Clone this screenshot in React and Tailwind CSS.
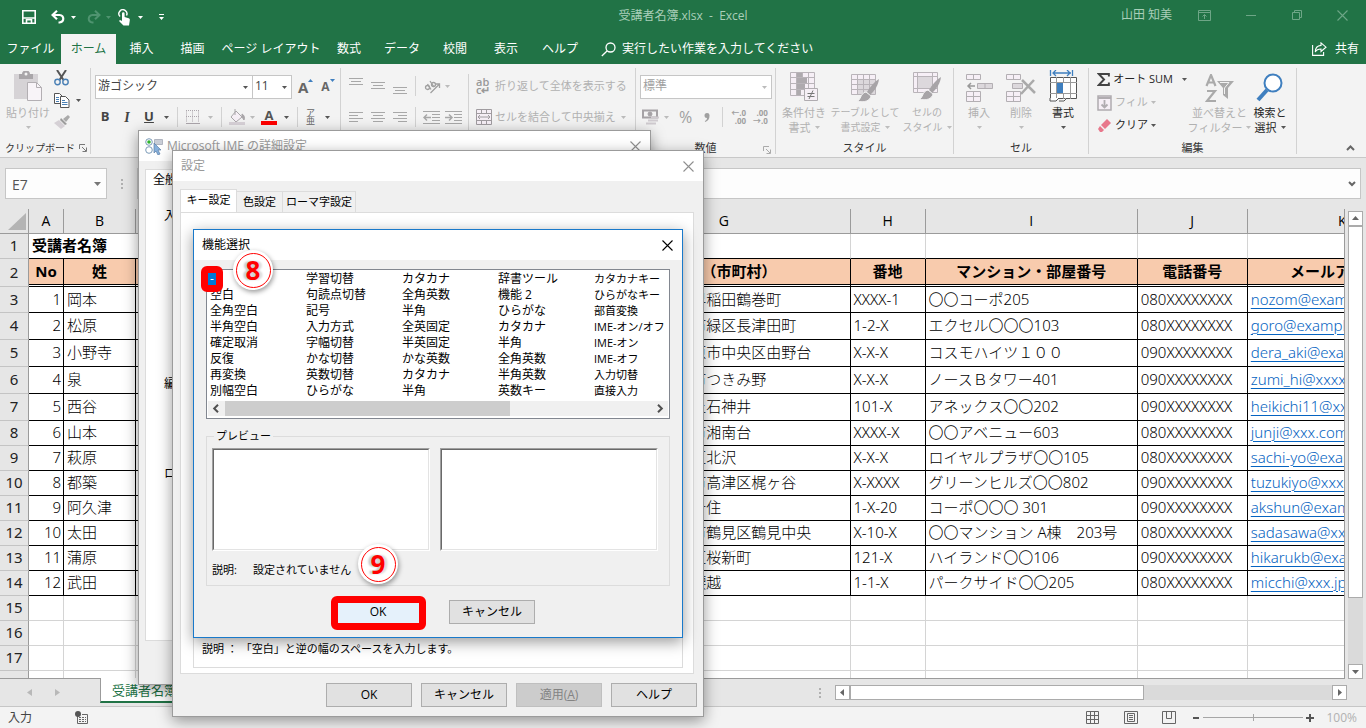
import React from 'react';

const TABS = [
  { label: 'ファイル', width: 'w-[61px]' },
  { label: 'ホーム', width: 'w-[55px]', active: true },
  { label: '挿入', width: 'w-[51px]' },
  { label: '描画', width: 'w-[51px]' },
  { label: 'ページ レイアウト', width: 'w-[106px]' },
  { label: '数式', width: 'w-[50px]' },
  { label: 'データ', width: 'w-[56px]' },
  { label: '校閲', width: 'w-[50px]' },
  { label: '表示', width: 'w-[52px]' },
  { label: 'ヘルプ', width: 'w-[56px]' },
];

const COLUMNS = [
  { id: 'A', width: 'w-[35px]' },
  { id: 'B', width: 'w-[72px]' },
  { id: 'C', width: 'w-[72px]' },
  { id: 'D', width: 'w-[130px]' },
  { id: 'E', width: 'w-[130px]' },
  { id: 'F', width: 'w-[130px]' },
  { id: 'G', width: 'w-[252px]' },
  { id: 'H', width: 'w-[75px]' },
  { id: 'I', width: 'w-[212px]' },
  { id: 'J', width: 'w-[110px]' },
  { id: 'K', width: 'w-[190px]' },
];

const HEADINGS = ['No', '姓', '', '', '', '', '住所（市町村）', '番地', 'マンション・部屋番号', '電話番号', 'メールアドレス'];

const MEMBERS = [
  ['岡本', '東京都新宿区早稲田鶴巻町', 'XXXX-1', '〇〇コーポ205', '080XXXXXXXX', 'nozom@example.com'],
  ['松原', '神奈川県横浜市緑区長津田町', '1-2-X', 'エクセル〇〇〇103', '080XXXXXXXX', 'goro@example.com'],
  ['小野寺', '神奈川県相模原市中央区由野台', 'X-X-X', 'コスモハイツ１００', '090XXXXXXXX', 'dera_aki@example.com'],
  ['泉', '神奈川県大和市つきみ野', 'X-X-X', 'ノースＢタワー401', '090XXXXXXXX', 'zumi_hi@xxxx.com'],
  ['西谷', '東京都練馬区上石神井', '101-X', 'アネックス〇〇202', '090XXXXXXXX', 'heikichi11@xxx.com'],
  ['山本', '神奈川県藤沢市湘南台', 'XXXX-X', '〇〇アベニュー603', '080XXXXXXXX', 'junji@xxx.com'],
  ['萩原', '東京都世田谷区北沢', 'X-X-X', 'ロイヤルプラザ〇〇105', '080XXXXXXXX', 'sachi-yo@example.com'],
  ['都築', '神奈川県川崎市高津区梶ヶ谷', 'X-XXXX', 'グリーンヒルズ〇〇802', '090XXXXXXXX', 'tuzukiyo@xxx.jp'],
  ['阿久津', '東京都足立区千住', '1-X-20', 'コーポ〇〇〇 301', '090XXXXXXXX', 'akshun@example.com'],
  ['太田', '神奈川県横浜市鶴見区鶴見中央', 'X-10-X', '〇〇マンション A棟　203号', '080XXXXXXXX', 'sadasawa@xxx.com'],
  ['蒲原', '東京都世田谷区桜新町', '121-X', 'ハイランド〇〇106', '090XXXXXXXX', 'hikarukb@example.com'],
  ['武田', '神奈川県鎌倉腰越', '1-1-X', 'パークサイド〇〇205', '080XXXXXXXX', 'micchi@xxx.jp'],
];

const FUNCTIONS = [
  ['-', '空白', '全角空白', '半角空白', '確定取消', '反復', '再変換', '別幅空白'],
  ['学習切替', '句読点切替', '記号', '入力方式', '字幅切替', 'かな切替', '英数切替', 'ひらがな'],
  ['カタカナ', '全角英数', '半角', '全英固定', '半英固定', 'かな英数', 'カタカナ', '半角'],
  ['辞書ツール', '機能 2', 'ひらがな', 'カタカナ', '半角', '全角英数', '半角英数', '英数キー'],
  ['カタカナキー', 'ひらがなキー', '部首変換', 'IME-オン/オフ', 'IME-オン', 'IME-オフ', '入力切替', '直接入力'],
];

/* ---------- small drawings ---------- */

function Caret({ className = 'text-[#555]' }) {
  return (
    <svg width="5" height="3" viewBox="0 0 5 3" className={`shrink-0 ${className}`} fill="currentColor">
      <path d="M0 0h5L2.5 3z" />
    </svg>
  );
}

function Cross({ className = 'text-[#8f8f8f]' }) {
  return (
    <svg width="11" height="11" viewBox="0 0 11 11" className={className} stroke="currentColor" strokeWidth="1.1">
      <path d="M.5.5l10 10M10.5.5l-10 10" />
    </svg>
  );
}

function Lines({ rows, className = 'text-[#a8a8a8]' }) {
  return (
    <svg width="14" height="17" viewBox="0 0 14 17" className={className} fill="currentColor">
      {rows.map(([x, y, w]) => (
        <rect key={y} x={x} y={y} width={w} height="1" />
      ))}
    </svg>
  );
}

function Launcher({ className = 'text-[#777]' }) {
  return (
    <svg width="8" height="8" viewBox="0 0 8 8" className={className} fill="none" stroke="currentColor">
      <path d="M.5 5V.5H6M3 3l4 4M7.500 3.500v4h-4" />
    </svg>
  );
}

function PasteIcon() {
  return (
    <svg width="30" height="31" viewBox="0 0 30 31">
      <path d="M1 3h24v25H1z" fill="#d6d3d6" />
      <path d="M6 3h3a4 3.500 0 0 1 8 0h3v5H6z" fill="#a9a6a9" />
      <circle cx="13" cy="3" r="1.500" fill="#f3f3f3" />
      <path d="M14.500 11.500h9l5 5v13h-14z" fill="#f8f4f8" stroke="#b3afb3" />
      <path d="M23.500 11.500v5h5" fill="none" stroke="#b3afb3" />
    </svg>
  );
}

function ScissorsIcon() {
  return (
    <svg width="15" height="16" viewBox="0 0 15 16" fill="none">
      <path d="M3 0l6.500 10M12 0L5.500 10" stroke="#555" strokeWidth="2" />
      <circle cx="3.500" cy="12" r="2.700" stroke="#4a80b5" strokeWidth="1.400" />
      <circle cx="11.500" cy="12" r="2.700" stroke="#4a80b5" strokeWidth="1.400" />
    </svg>
  );
}

function CopyIcon() {
  return (
    <svg width="16" height="15" viewBox="0 0 16 15" fill="#fff" stroke="#555">
      <path d="M.5.5h5l3 3v7h-8z" />
      <path d="M2 4.500h3M2 6.500h3M2 8.500h3" stroke="#4a80b5" />
      <path d="M6.500 3.500h5l3.500 3.500v7.500H6.500z" />
      <path d="M8 7.500h3M8 9.500h5.500M8 11.500h5.500" stroke="#4a80b5" />
    </svg>
  );
}

function BrushIcon() {
  return (
    <svg width="16" height="14" viewBox="0 0 16 14">
      <path d="M9 4l5-4 2 2-4 5z" fill="#aaa" />
      <path d="M7 3l6 6-2 1-5-5z" fill="#9c9c9c" />
      <path d="M5 5l6 6-4 3-7-6z" fill="#d5d0d5" />
    </svg>
  );
}

function ConditionalIcon() {
  return (
    <svg width="30" height="31" viewBox="0 0 30 31" fill="none">
      <path d="M1 1h25v25H1z" fill="#f6eff6" />
      <path d="M8 1h5v5H8zM8 7h10v5H8zM8 13h8v5H8zM8 19h4v6H8z" fill="#aeaaae" />
      <path d="M1.500 1.500h24v23h-24zM1 6.500h25M1 12.500h25M1 18.500h25M7.500 1v24M13.500 1v6M19.500 1v24" stroke="#b9b4b9" />
      <path d="M15.500 17.500h13v12h-13z" fill="#f6eff6" stroke="#b0acb0" />
      <path d="M18.500 22.500h7M18.500 25.500h7M24 19.500l-4 8.500" stroke="#777" />
    </svg>
  );
}

function BrushOver() {
  return (
    <>
      <path d="M29 6c-5 3-9 8-12 13l3 3c5-5 8-9 9-16z" fill="#a7a4a7" />
      <path d="M16 19l5 4c-1 5-7 7-14 5 4 0 3-8 9-9z" fill="#a7a4a7" stroke="#f3f3f3" />
    </>
  );
}

function TableStyleIcon() {
  return (
    <svg width="30" height="29" viewBox="0 0 30 29" fill="none">
      <path d="M1.500 1.500h24v20h-24z" fill="#f6eff6" />
      <path d="M7 6h18v15H7z" fill="#dcd8dc" />
      <path d="M1.500 1.500h24v20h-24zM1 6.500h25M1 11.500h25M1 16.500h25M7.500 1v21M13.500 1v21M19.500 1v21" stroke="#b9b4b9" />
      <BrushOver />
    </svg>
  );
}

function CellStyleIcon() {
  return (
    <svg width="30" height="31" viewBox="0 0 30 31" fill="none">
      <path d="M1.500 1.500h24v20h-24z" fill="#f6eff6" />
      <path d="M6 6h15v11H6z" fill="#dcd8dc" />
      <path d="M1.500 1.500h24v20h-24zM1 5.500h25M1 17.500h25M5.500 1v21M20.500 1v21" stroke="#b9b4b9" />
      <BrushOver />
    </svg>
  );
}

function InsertCellsIcon() {
  return (
    <svg width="27" height="28" viewBox="0 0 27 28" fill="#f6eff6" stroke="#b3afb3">
      <path d="M.5.5h14v5H.5zM7.500.5v5" />
      <path d="M11.500 9.500h15v5h-15zM19 9.500v5" fill="#dcd8dc" />
      <path d="M.5 17.500h14v10H.5zM7.500 17.500v10M.5 22.500h14" />
      <path d="M2 12h7M5 9l-3 3 3 3" fill="none" stroke="#999" strokeWidth="1.500" />
    </svg>
  );
}

function DeleteCellsIcon() {
  return (
    <svg width="30" height="28" viewBox="0 0 30 28" fill="#f6eff6" stroke="#b3afb3">
      <path d="M.5.5h14v5H.5zM7.500.5v5" />
      <path d="M6.500 9.500h10v5h-10z" fill="#dcd8dc" />
      <path d="M.5 17.500h14v10H.5zM7.500 17.500v10M.5 22.500h14" />
      <path d="M16 6l13 13M28 6L15 20" fill="none" stroke="#aaa" strokeWidth="2.500" />
    </svg>
  );
}

function FormatCellsIcon() {
  return (
    <svg width="29" height="32" viewBox="0 0 29 32" fill="none">
      <path d="M1.500 0v6M23.500 0v6M4 3h18M7 0L4 3l3 3M18 0l3 3-3 3" stroke="#3f7fbf" strokeWidth="1.300" />
      <path d="M1.500 7.500h26v21h-26z" fill="#fff" stroke="#555" />
      <path d="M1 12.500h27M1 23.500h27M7.500 7v22M14.500 7v6M14.500 23v6M21.500 7v22" stroke="#999" />
      <path d="M8 13h6v10H8z" fill="#3f7fbf" />
      <path d="M1 28v3h6l3-3M10 31h5l3-3" fill="#fff" stroke="#555" />
    </svg>
  );
}

function SortIcon() {
  return (
    <svg width="30" height="28" viewBox="0 0 30 28" fill="none" stroke="#aaa" strokeWidth="2.200">
      <path d="M1.500 12L6 1l4.500 11M3 8.500h6" />
      <path d="M2 17h8L2 27h9" />
      <path d="M12 7h17l-6 7v11l-5-4v-7z" fill="#aaa" stroke="none" />
      <path d="M15 8.500h9l-4.500 5.500v6" stroke="#f3f3f3" strokeWidth="1" />
    </svg>
  );
}

function FindIcon() {
  return (
    <svg width="30" height="29" viewBox="0 0 30 29" fill="none" stroke="#3f7fbf">
      <circle cx="18" cy="10" r="8.500" fill="#fff" strokeWidth="2" />
      <path d="M12 17L3 27" strokeWidth="4" />
    </svg>
  );
}

/* ---------- title bar and tabs ---------- */

function TitleBar() {
  return (
    <header className="flex h-[34px] items-center bg-[#217346] pr-[18px] text-[12px] text-[#a9cfb9]">
      <div className="flex flex-1 items-center pl-[22px] text-white">
        <button type="button" aria-label="上書き保存">
          <svg width="14" height="14" viewBox="0 0 14 14" fill="none" stroke="currentColor" strokeWidth="1.600">
            <path d="M.8.8h12.400v12.400H.8zM.8 8h12.400M4.500 13V9.800h5V13" />
          </svg>
        </button>
        <button type="button" aria-label="元に戻す" className="ml-[15px] flex items-center gap-[5px]">
          <svg width="15" height="14" viewBox="0 0 15 14" fill="none" stroke="currentColor" strokeWidth="2.200">
            <path d="M6 .8L1.500 5 6 9.200M2 5h6.500a4.500 3.800 0 0 1 0 7.500H7.500" />
          </svg>
          <Caret className="text-white" />
        </button>
        <button type="button" aria-label="やり直し" className="ml-[10px] flex items-center gap-[5px] text-[#4f9470]">
          <svg width="15" height="14" viewBox="0 0 15 14" fill="none" stroke="currentColor" strokeWidth="2">
            <path d="M9 .8L13.500 5 9 9.200M13 5H6.500a4.500 3.800 0 0 0 0 7.500H7.500" />
          </svg>
          <Caret className="text-[#4f9470]" />
        </button>
        <button type="button" aria-label="タッチ モード" className="ml-[7px] flex items-center gap-2">
          <svg width="12" height="17" viewBox="0 0 12 17">
            <path d="M2 7.500a4 4 0 1 1 6.500-1" fill="none" stroke="#fff" strokeWidth="1.400" />
            <path d="M4 4.500a1.300 1.300 0 0 1 2.600 0V8l4 1.200c1 .4 1.400 1 1.200 2L11 16.500H5.500L1 12l1-1 2 1z" fill="#fff" />
          </svg>
          <Caret className="text-white" />
        </button>
        <button type="button" aria-label="クイック アクセス ツール バーのユーザー設定" className="ml-[15px]">
          <svg width="7" height="7" viewBox="0 0 7 7" fill="currentColor">
            <path d="M1 0h5v1H1zM1 3h5L3.500 6z" />
          </svg>
        </button>
      </div>
      <h1 className="mr-1 whitespace-pre pb-[3px]">受講者名簿.xlsx  -  Excel</h1>
      <div className="flex flex-1 items-center justify-end pb-1 text-[#6ea687]">
        <span className="mr-[26px] text-[#a9cfb9]">山田 知美</span>
        <button type="button" aria-label="リボンの表示オプション">
          <svg width="13" height="11" viewBox="0 0 13 11" fill="none" stroke="currentColor">
            <path d="M.5.5h12v10H.5zM.5 2.500h12M6.500 9V4.500M4.500 6.500l2-2 2 2" />
          </svg>
        </button>
        <button type="button" aria-label="最小化" className="ml-[35px] h-px w-2.5 bg-[#6ea687]" />
        <button type="button" aria-label="元のサイズに戻す" className="ml-9">
          <svg width="10" height="10" viewBox="0 0 10 10" fill="none" stroke="currentColor">
            <path d="M.5 2.500h7v7h-7zM2.500 2V.5h7v7H8" />
          </svg>
        </button>
        <button type="button" aria-label="閉じる" className="ml-[35px]">
          <Cross className="text-[#6ea687]" />
        </button>
      </div>
    </header>
  );
}

function TabBar() {
  return (
    <nav className="flex h-[30px] items-stretch bg-[#217346] text-[12px] text-white">
      {TABS.map((tab) => (
        <button
          key={tab.label}
          type="button"
          className={`${tab.width} whitespace-nowrap ${tab.active ? 'bg-[#f3f3f3] text-[#217346]' : ''}`}
        >
          {tab.label}
        </button>
      ))}
      <button type="button" className="flex items-center gap-1.5 whitespace-nowrap pl-[13px]">
        <svg width="15" height="15" viewBox="0 0 15 15" fill="none" stroke="currentColor" strokeWidth="1.300">
          <circle cx="9.500" cy="5.500" r="4.500" />
          <path d="M6.300 8.700L.8 14" />
        </svg>
        実行したい作業を入力してください
      </button>
      <button type="button" className="ml-auto flex items-center gap-2 pr-[7px]">
        <svg width="15" height="14" viewBox="0 0 15 14" fill="none" stroke="currentColor" strokeWidth="1.100">
          <path d="M.6 3v10.400h11V10" />
          <path d="M9 .9l5 4.300-5 4.300V7C6 7 4.300 8 3.300 10c0-4 2-6.300 5.700-6.600z" />
        </svg>
        共有
      </button>
    </nav>
  );
}

/* ---------- ribbon ---------- */

function Group({ label, launcher, className, children }) {
  return (
    <section className={`relative flex shrink-0 flex-col border-r border-[#d2d2d2] ${className}`}>
      <div className="flex h-[74px]">{children}</div>
      {label && <h2 className="text-center text-[11px] leading-3 text-[#333]">{label}</h2>}
      {launcher && (
        <button type="button" aria-label={`${label}の詳細`} className="absolute bottom-0 right-1">
          <Launcher className={launcher} />
        </button>
      )}
    </section>
  );
}

function BigButton({ icon, lines, className, enabled, size = 'text-[11px]' }) {
  const [first, second] = lines;
  return (
    <button
      type="button"
      className={`flex flex-col items-center whitespace-nowrap leading-[15px] ${size} ${className} ${enabled ? 'text-[#262626]' : 'text-[#b1b1b1]'}`}
    >
      <span className="flex h-[34px] items-end justify-center">{icon}</span>
      <span className="mt-[3px]">{first}</span>
      <span className="flex h-[15px] items-center gap-1">
        {second}
        <Caret className={enabled ? 'text-[#555]' : 'text-[#bdbdbd]'} />
      </span>
    </button>
  );
}

function VLine({ className = 'h-5' }) {
  return <span className={`w-px shrink-0 bg-[#d2d2d2] ${className}`} />;
}

function ClipboardGroup() {
  return (
    <Group label="" className="w-[91px]">
      <BigButton icon={<PasteIcon />} lines={['貼り付け', '']} className="ml-[5px] w-[46px]" />
      <div className="flex flex-col gap-[7px] pl-[3px] pt-[2px]">
        <button type="button" aria-label="切り取り"><ScissorsIcon /></button>
        <button type="button" aria-label="コピー" className="flex items-center gap-[6px]">
          <CopyIcon />
          <Caret />
        </button>
        <button type="button" aria-label="書式のコピー"><BrushIcon /></button>
      </div>
      <div className="absolute bottom-0 flex w-full items-center justify-between pl-[5px] pr-[3px]">
        <h2 className="whitespace-nowrap text-[10px] leading-3 text-[#333]">クリップボード</h2>
        <button type="button" aria-label="クリップボードの詳細"><Launcher /></button>
      </div>
    </Group>
  );
}

function Combo({ label, value, className, muted }) {
  return (
    <div className={`relative h-6 border border-[#c6c6c6] bg-white ${className}`}>
      <select
        aria-label={label}
        className={`block h-5 w-full appearance-none bg-transparent pl-0.5 text-[12px] leading-5 outline-none ${muted ? 'text-[#a0a0a0]' : 'text-[#444]'}`}
      >
        <option>{value}</option>
      </select>
      <span className="pointer-events-none absolute inset-y-0 right-1 flex items-center">
        <Caret className={muted ? 'text-[#bbb]' : 'text-[#555]'} />
      </span>
    </div>
  );
}

function FontGroup() {
  return (
    <Group className="w-[250px]">
      <div className="flex flex-col pl-1 pt-[7px]">
        <div className="flex items-center">
          <Combo label="フォント" value="游ゴシック" className="w-[158px]" />
          <Combo label="フォント サイズ" value="11" className="-ml-px w-[40px]" />
          <button type="button" aria-label="フォント サイズの拡大" className="ml-[6px] flex items-start text-[15px] font-bold leading-5 text-[#666]">
            A<svg width="5" height="3" viewBox="0 0 5 3" className="mt-[2px]" fill="#3f7fbf"><path d="M0 3h5L2.500 0z" /></svg>
          </button>
          <button type="button" aria-label="フォント サイズの縮小" className="ml-[8px] flex items-start text-[12px] font-bold leading-5 text-[#666]">
            A<Caret className="mt-[2px] text-[#3f7fbf]" />
          </button>
        </div>
        <div className="mt-2 flex h-5 items-center text-[13px] text-[#444]">
          <button type="button" className="ml-[5px] w-[10px] font-bold">B</button>
          <button type="button" className="ml-[12px] w-[10px] font-['Liberation_Serif',serif] text-[14px] font-bold italic">I</button>
          <button type="button" className="ml-[12px] w-[10px] font-bold underline">U</button>
          <span className="ml-[10px]"><Caret /></span>
          <VLine className="ml-2 h-5" />
          <button type="button" aria-label="罫線" className="ml-2">
            <svg width="14" height="14" viewBox="0 0 14 14" stroke="#aca6ac" fill="none">
              <path d="M.5.500v12M6.500.5v12M12.500.5v12M0 .5h13M0 6.500h13" strokeDasharray="1 1" />
              <path d="M0 13.500h14" />
            </svg>
          </button>
          <span className="ml-2"><Caret className="text-[#bbb]" /></span>
          <VLine className="ml-2 h-5" />
          <button type="button" aria-label="塗りつぶしの色" className="ml-[7px]">
            <svg width="17" height="16" viewBox="0 0 17 16" fill="none" stroke="#a9a6a9">
              <path d="M7 2l6 6-6 5-5-5z" fill="#f6eff6" />
              <path d="M6 6V0M13 5c2 1 3 3 2 6l-2-3z" fill="#a9a6a9" />
              <path d="M0 14.500h16" stroke="#d8d2d8" strokeWidth="3" />
            </svg>
          </button>
          <span className="ml-1"><Caret className="text-[#bbb]" /></span>
          <button type="button" className="ml-[6px] w-4 border-b-4 border-[#f00] text-center font-bold leading-3 text-[#555]">A</button>
          <span className="ml-[7px]"><Caret /></span>
          <VLine className="ml-2 h-5" />
          <button type="button" aria-label="ふりがなの表示/非表示" className="ml-2 text-[9px] leading-2 text-[#666]">
            <span className="block">ア</span>
            <span className="block">亜</span>
          </button>
          <span className="ml-[10px]"><Caret /></span>
        </div>
      </div>
    </Group>
  );
}

function AlignGroup() {
  return (
    <Group className="w-[295px]">
      <div className="flex flex-col gap-[14px] pl-2 pt-[9px]">
        <div className="flex h-[17px] gap-2">
          <Lines rows={[[0, 1, 14], [2, 4, 10], [0, 7, 14]]} />
          <Lines rows={[[0, 5, 14], [2, 8, 10], [0, 11, 14]]} />
          <Lines rows={[[0, 10, 14], [2, 13, 10], [0, 16, 14]]} />
        </div>
        <div className="flex h-[17px] gap-2">
          <Lines rows={[[0, 4, 14], [0, 7, 9], [0, 10, 14], [0, 13, 9]]} />
          <Lines rows={[[0, 4, 14], [2, 7, 10], [0, 10, 14], [2, 13, 10]]} />
          <Lines rows={[[0, 4, 14], [5, 7, 9], [0, 10, 14], [5, 13, 9]]} />
        </div>
      </div>
      <div className="flex flex-col gap-[11px] pl-2 pt-2">
        <div className="flex h-5 items-center">
          <VLine />
          <button type="button" aria-label="方向" className="ml-2 flex items-center gap-1">
            <svg width="17" height="15" viewBox="0 0 17 15" fill="none" stroke="#a0a0a0" strokeWidth="1.300">
              <circle cx="3.500" cy="8.500" r="2" />
              <path d="M3.500 5l3.500 5.500M6 2l4 6" />
              <circle cx="9.500" cy="5.500" r="2" />
              <path d="M6.500 14l8.500-8.500M11.500 5h4v4" />
            </svg>
            <Caret className="text-[#bbb]" />
          </button>
        </div>
        <div className="flex h-5 items-center">
          <VLine />
          <button type="button" aria-label="インデントを減らす" className="ml-[7px]">
            <svg width="17" height="13" viewBox="0 0 17 13" stroke="#a8a8a8" fill="none">
              <path d="M0 .5h17M9 3.500h8M9 6.500h8M9 9.500h8M0 12.500h17" />
              <path d="M1 6.500h7M4 3.500l-3 3 3 3" strokeWidth="1.500" />
            </svg>
          </button>
          <button type="button" aria-label="インデントを増やす" className="ml-[5px]">
            <svg width="17" height="13" viewBox="0 0 17 13" stroke="#a8a8a8" fill="none">
              <path d="M0 .5h17M9 3.500h8M9 6.500h8M9 9.500h8M0 12.500h17" />
              <path d="M0 6.500h7M4 3.500l3 3-3 3" strokeWidth="1.500" />
            </svg>
          </button>
        </div>
      </div>
      <VLine className="ml-[6px] mt-1.5 h-14" />
      <div className="flex flex-col gap-[11px] whitespace-nowrap pl-[7px] pt-2 text-[11px] text-[#b1b1b1]">
        <button type="button" className="flex h-5 items-center gap-[3px]">
          <span className="w-4 text-left text-[11px] font-semibold leading-2 text-[#999]">
            ab<br />c↵
          </span>
          折り返して全体を表示する
        </button>
        <button type="button" className="flex h-5 items-center gap-[3px]">
          <svg width="16" height="16" viewBox="0 0 16 16" fill="#f6eff6" stroke="#a09ca0">
            <path d="M.5.5h15v15H.5zM.5 4.500h15M.5 11.500h15M5.500.5v4M10.500.5v4M5.500 11.500v4M10.500 11.500v4" />
            <path d="M2 8h12M4 6L2 8l2 2M12 6l2 2-2 2" fill="none" />
          </svg>
          セルを結合して中央揃え
          <Caret className="ml-0.5 text-[#bbb]" />
        </button>
      </div>
    </Group>
  );
}

function NumberGroup() {
  return (
    <Group label="数値" launcher="text-[#aaa]" className="w-[140px]">
      <div className="flex flex-col pl-1 pt-[7px]">
        <Combo label="表示形式" value="標準" muted className="w-[132px]" />
        <div className="mt-2 flex h-5 items-center text-[#a0a0a0]">
          <svg width="17" height="16" viewBox="0 0 17 16" className="ml-[2px]" fill="none" stroke="#a5a2a5">
            <path d="M1 1.500h14v7H1z" strokeWidth="2" />
            <circle cx="8" cy="5" r="2" fill="#a5a2a5" />
            <path d="M9 8.500h8M6 11.500h10M4 14.500h10" stroke="#d0cbd0" strokeWidth="2" />
          </svg>
          <Caret className="ml-[5px] text-[#bbb]" />
          <button type="button" className="ml-[10px] text-[16px] leading-5">%</button>
          <button type="button" aria-label="桁区切りスタイル" className="ml-3">
            <svg width="6" height="9" viewBox="0 0 6 9" fill="currentColor">
              <path d="M3 0a2.500 2.500 0 0 1 2.500 2.800C5.500 6 4 8 1.200 9L.8 8C2.300 7.300 3 6.300 3 5A2.500 2.500 0 0 1 3 0z" />
            </svg>
          </button>
          <VLine className="ml-3 h-5" />
          <button type="button" className="ml-2 text-[8px] font-bold leading-2">
            <span className="block text-left">←.0</span>
            <span className="block text-right">.00</span>
          </button>
          <button type="button" className="ml-[7px] text-[8px] font-bold leading-2">
            <span className="block text-right">.00</span>
            <span className="block text-left">→.0</span>
          </button>
        </div>
      </div>
    </Group>
  );
}

function EditGroup() {
  return (
    <Group label="編集" className="w-[208px]">
      <div className="flex w-[98px] flex-col whitespace-nowrap pl-2 text-[11px] text-[#262626]">
        <button type="button" className="flex h-[23px] items-center gap-[3px]">
          <svg width="15" height="15" viewBox="0 0 15 15" fill="none" stroke="#444" strokeWidth="2.200">
            <path d="M13.500 4V1.200H2L8 7.500l-6 6.300h11.500V11" />
          </svg>
          オート SUM
          <Caret className="ml-[6px] text-[#555]" />
        </button>
        <button type="button" className="flex h-[23px] items-center gap-[3px] text-[#b1b1b1]">
          <svg width="15" height="16" viewBox="0 0 15 16" fill="#f6eff6" stroke="#b0acb0">
            <path d="M1 1h13v14H1z" strokeWidth="1.500" />
            <path d="M1 3h13M7.500 5v8M4.500 9.500l3 3 3-3" strokeWidth="1.800" fill="none" />
          </svg>
          フィル
          <Caret className="text-[#bbb]" />
        </button>
        <button type="button" className="flex h-[23px] items-center gap-[3px]">
          <svg width="15" height="14" viewBox="0 0 15 14">
            <path d="M4 6l6-6 4 4-6 6z" fill="#e8788c" />
            <path d="M3 7l4 4-2 2H3L1 10z" fill="#e8788c" />
          </svg>
          クリア
          <Caret />
        </button>
      </div>
      <BigButton icon={<SortIcon />} lines={['並べ替えと', 'フィルター']} className="ml-[3px] w-[59px]" />
      <BigButton icon={<FindIcon />} lines={['検索と', '選択']} enabled className="w-[42px]" />
    </Group>
  );
}

function Ribbon() {
  return (
    <div className="flex h-[94px] items-start border-b border-[#c8c8c8] bg-[#f3f3f3] pt-1">
      <div className="flex h-[86px]">
        <ClipboardGroup />
        <FontGroup />
        <AlignGroup />
        <NumberGroup />
        <Group label="スタイル" className="w-[178px]">
          <BigButton icon={<ConditionalIcon />} lines={['条件付き', '書式']} className="ml-[5px] w-[46px]" />
          <BigButton icon={<TableStyleIcon />} lines={['テーブルとして', '書式設定']} size="text-[10px]" className="ml-[3px] w-[70px]" />
          <BigButton icon={<CellStyleIcon />} lines={['セルの', 'スタイル']} size="text-[10px]" className="ml-[2px] w-[50px]" />
        </Group>
        <Group label="セル" className="w-[135px]">
          <BigButton icon={<InsertCellsIcon />} lines={['挿入', '']} className="ml-[4px] w-[42px]" />
          <BigButton icon={<DeleteCellsIcon />} lines={['削除', '']} className="w-[42px]" />
          <BigButton icon={<FormatCellsIcon />} lines={['書式', '']} enabled className="w-[42px]" />
        </Group>
        <EditGroup />
      </div>
      <button type="button" aria-label="リボンを折りたたむ" className="ml-auto mr-[11px] mt-[77px]">
        <svg width="9" height="6" viewBox="0 0 9 6" fill="none" stroke="#666" strokeWidth="2">
          <path d="M1 5l3.500-3.500L8 5" />
        </svg>
      </button>
    </div>
  );
}

/* ---------- sheet ---------- */

function FormulaBar() {
  return (
    <div className="flex h-[51px] items-start bg-[#e6e6e6] pl-[5px] pr-[5px] pt-[10px]">
      <label className="flex h-[31px] w-[102px] items-center border border-[#c6c6c6] bg-[#fdfdfd] pr-[5px]">
        <input aria-label="名前ボックス" defaultValue="E7" className="w-full min-w-0 bg-transparent pl-[6px] pt-[2px] text-[14px] text-[#555] outline-none" />
        <svg width="7" height="4" viewBox="0 0 7 4" className="shrink-0" fill="#777"><path d="M0 0h7L3.500 4z" /></svg>
      </label>
      <div className="flex h-[31px] w-[30px] flex-col items-center justify-center gap-[2px]">
        <span className="size-[2px] bg-[#b0b0b0]" />
        <span className="size-[2px] bg-[#b0b0b0]" />
        <span className="size-[2px] bg-[#b0b0b0]" />
      </div>
      <label className="flex h-[31px] flex-1 items-center border border-[#c6c6c6] bg-[#fdfdfd] pr-1">
        <input aria-label="数式バー" className="w-full bg-transparent outline-none" />
        <svg width="8" height="6" viewBox="0 0 8 6" className="shrink-0" fill="none" stroke="#666" strokeWidth="2">
          <path d="M1 1l3 3 3-3" />
        </svg>
      </label>
    </div>
  );
}

function rowHeight(row) {
  if (row === 2) return 'h-[28px]';
  if (row === 3) return 'h-[26px]';
  if (row > 3 && row < 8) return 'h-[27px]';
  return 'h-[25px]';
}

function RowHead({ row }) {
  return (
    <th scope="row" className="border-b border-r border-b-[#c4c4c4] border-r-[#9b9b9b] bg-[#e6e6e6] p-0 pb-[2px] text-center font-normal text-[#222]">
      {row}
    </th>
  );
}

function MemberRow({ member, index }) {
  const row = index + 3;
  const [name, city, block, building, phone, mail] = member;
  const cell = 'overflow-hidden whitespace-nowrap border-b border-r border-black p-0 pb-[2px] pl-[3px]';
  return (
    <tr className={`font-light ${rowHeight(row)}`}>
      <RowHead row={row} />
      <td className={`${cell} pr-[2px] text-right`}>{index + 1}</td>
      <td className={cell}>{name}</td>
      <td className={cell} />
      <td className={cell} />
      <td className={cell} />
      <td className={cell} />
      <td className={cell}>{city}</td>
      <td className={cell}>{block}</td>
      <td className={cell}>{building}</td>
      <td className={cell}>{phone}</td>
      <td className={cell}>
        <a href="#mail" className="text-[#0563c1] underline decoration-1 underline-offset-3">{mail}</a>
      </td>
    </tr>
  );
}

function Sheet() {
  return (
    <div className="min-w-0 flex-1 overflow-hidden border-b border-r border-[#9b9b9b] bg-white">
      <table className="w-[1438px] table-fixed border-separate border-spacing-0 font-['Noto_Sans','Noto_Sans_CJK_JP',sans-serif] text-[15px] leading-5 text-black">
        <thead>
          <tr className="h-[25px] bg-[#e6e6e6] font-['Open_Sans',sans-serif]">
            <th className="w-[29px] border-b border-r border-[#9b9b9b] p-0">
              <svg width="18" height="17" viewBox="0 0 18 17" className="ml-2" fill="#b4b4b4"><path d="M18 0v17H0z" /></svg>
            </th>
            {COLUMNS.map((col) => (
              <th key={col.id} scope="col" className={`${col.width} border-b border-r border-[#9b9b9b] p-0 text-center text-[14px] font-normal`}>
                {col.id}
              </th>
            ))}
          </tr>
        </thead>
        <tbody>
          <tr className={rowHeight(1)}>
            <RowHead row={1} />
            <td colSpan={6} className="border-b border-r border-b-black border-r-[#d4d4d4] p-0 pb-[2px] pl-[3px] font-bold">受講者名簿</td>
            {COLUMNS.slice(6).map((col) => (
              <td key={col.id} className="border-b border-r border-b-black border-r-[#d4d4d4]" />
            ))}
          </tr>
          <tr className={rowHeight(2)}>
            <RowHead row={2} />
            {HEADINGS.map((heading, i) => (
              <th key={COLUMNS[i].id} className="whitespace-nowrap border-b-3 border-r border-double border-black bg-[#f8cbad] bg-clip-padding p-0 pb-[2px] text-center font-bold [border-right-style:solid]">
                {heading}
              </th>
            ))}
          </tr>
          {MEMBERS.map((member, i) => (
            <MemberRow key={member[0]} member={member} index={i} />
          ))}
          {[15, 16, 17, 18].map((row) => (
            <tr key={row} className={rowHeight(row)}>
              <RowHead row={row} />
              {COLUMNS.map((col) => (
                <td key={col.id} className="border-b border-r border-[#d4d4d4]" />
              ))}
            </tr>
          ))}
        </tbody>
      </table>
    </div>
  );
}

function ScrollButton({ label, path, className = '' }) {
  return (
    <button type="button" aria-label={label} className={`flex size-[15px] shrink-0 items-center justify-center border border-[#ababab] bg-white ${className}`}>
      <svg width="7" height="7" viewBox="0 0 7 7" fill="#666"><path d={path} /></svg>
    </button>
  );
}

function SheetTabs() {
  return (
    <div className="flex h-[27px] shrink-0 items-stretch bg-[#e6e6e6]">
      <div className="flex w-[100px] items-center gap-[23px] pl-[27px]">
        <svg width="5" height="7" viewBox="0 0 5 7" fill="#b8b8b8"><path d="M5 0v7L0 3.500z" /></svg>
        <svg width="5" height="7" viewBox="0 0 5 7" fill="#b8b8b8"><path d="M0 0v7l5-3.500z" /></svg>
      </div>
      <button type="button" className="-mt-px mb-[3px] border-b-2 border-l border-b-[#217346] border-l-[#9b9b9b] bg-white px-[11px] pt-[2px] text-[13px] text-[#217346]">
        受講者名簿
      </button>
      <div className="flex flex-1 items-center justify-end pr-[19px]">
        <div className="mr-[14px] flex flex-col gap-[2px]">
          <span className="size-[2px] bg-[#b0b0b0]" />
          <span className="size-[2px] bg-[#b0b0b0]" />
          <span className="size-[2px] bg-[#b0b0b0]" />
        </div>
        <div className="flex w-[512px] items-center">
          <ScrollButton label="左へスクロール" path="M5 0v7L1 3.500z" />
          <div className="h-[15px] flex-1 bg-[#dadada]">
            <div className="h-full w-[61%] border border-[#ababab] bg-white" />
          </div>
          <ScrollButton label="右へスクロール" path="M2 0v7l4-3.500z" />
        </div>
      </div>
    </div>
  );
}

function StatusBar() {
  return (
    <footer className="flex h-[22px] shrink-0 items-center border-t border-[#c6c6c6] bg-[#f3f3f3] pl-2 pr-[9px] text-[12px] text-[#444]">
      入力
      <svg width="14" height="13" viewBox="0 0 14 13" className="ml-[43px]" fill="none" stroke="#666">
        <path d="M2.500 5v7.500h10v-9H7" />
        <circle cx="3" cy="3" r="3" fill="#555" stroke="none" />
        <path d="M4 6.500h7M4 8.500h7M4 10.500h7" strokeDasharray="2 1" />
      </svg>
      <div className="ml-auto flex items-center text-[#666]">
        <button type="button" aria-label="標準">
          <svg width="13" height="13" viewBox="0 0 13 13" fill="none" stroke="currentColor"><path d="M.5.5h12v12H.5zM.5 4.500h12M.5 8.500h12M4.500.5v12M8.500.5v12" /></svg>
        </button>
        <button type="button" aria-label="ページ レイアウト" className="ml-[25px]">
          <svg width="14" height="13" viewBox="0 0 14 13" fill="none" stroke="currentColor"><path d="M.5.5h13v12H.5zM3.500 2.500h7v8h-7zM5 4.500h4M5 6.500h4M5 8.500h4" /></svg>
        </button>
        <button type="button" aria-label="改ページ プレビュー" className="ml-6">
          <svg width="14" height="13" viewBox="0 0 14 13" fill="none" stroke="currentColor"><path d="M.5.5h13v12H.5zM4.500.5v7h5v-7" /></svg>
        </button>
        <button type="button" aria-label="縮小" className="ml-[17px] h-[2px] w-[6px] bg-[#555]" />
        <input
          type="range"
          aria-label="ズーム"
          defaultValue={50}
          className="ml-1 h-px w-[100px] appearance-none bg-[#a6a6a6] [&::-webkit-slider-thumb]:h-[7px] [&::-webkit-slider-thumb]:w-px [&::-webkit-slider-thumb]:appearance-none [&::-webkit-slider-thumb]:bg-[#a6a6a6]"
        />
        <button type="button" aria-label="拡大" className="ml-[3px]">
          <svg width="8" height="8" viewBox="0 0 8 8" fill="#555"><path d="M3 0h2v3h3v2H5v3H3V5H0V3h3z" /></svg>
        </button>
        <span className="ml-3 text-[#b1b1b1]">100%</span>
      </div>
    </footer>
  );
}

/* ---------- dialogs ---------- */

function Dialog({ title, icon, active, className, children }) {
  return (
    <div
      role="dialog"
      aria-label={title}
      className={`absolute flex flex-col border bg-[#f0f0f0] shadow-[0_4px_14px_rgba(0,0,0,0.4)] ${active ? 'border-[#1979ca] text-black' : 'border-[#9b9b9b]'} ${className}`}
    >
      <div className={`flex h-[30px] shrink-0 items-center bg-white pl-2 pr-[9px] text-[12px] ${active ? 'text-black' : 'text-[#999]'}`}>
        {icon}
        <h2 className="flex-1">{title}</h2>
        <button type="button" aria-label="閉じる">
          <Cross className={active ? 'text-black' : 'text-[#8f8f8f]'} />
        </button>
      </div>
      {children}
    </div>
  );
}

function DialogButton({ children, disabled, focused }) {
  return (
    <button
      type="button"
      disabled={disabled}
      className={`h-6 w-[86px] border text-[12px] ${
        disabled ? 'border-[#bfbfbf] bg-[#ccc] text-[#838383]' : focused ? 'border-[#0078d7] bg-[#e5f1fb]' : 'border-[#adadad] bg-[#e1e1e1]'
      }`}
    >
      {children}
    </button>
  );
}

function ImeDialog() {
  const icon = (
    <svg width="18" height="17" viewBox="0 0 18 17" className="-ml-[2px] mr-[4px]" fill="none">
      <circle cx="4" cy="4" r="3.300" stroke="#7b9bb8" />
      <circle cx="4" cy="4" r="1.800" fill="#2fb52f" />
      <circle cx="4" cy="12" r="3.300" stroke="#7b9bb8" />
      <path d="M9.500 1.500h8v5h-8z" fill="#c9cdd6" stroke="#b0b5c0" />
      <path d="M9 5l7 7h-3l2 4-2 1-2-4-2 2z" fill="#86b0dc" stroke="#5b7fa8" strokeWidth=".7" />
    </svg>
  );
  return (
    <Dialog title="Microsoft IME の詳細設定" icon={icon} className="left-[138px] top-[130px] h-[555px] w-[513px]">
      <div className="mx-[6px] mb-[43px] mt-2 flex flex-1 flex-col border border-[#dcdcdc] bg-white text-[12px] leading-4">
        <p className="pl-[7px] pt-[2px]">全般</p>
        <div className="flex flex-col pl-[18px]">
          <p className="pt-5">入力</p>
          <p className="pt-[152px]">編集</p>
          <p className="pt-[74px]">ローマ</p>
        </div>
      </div>
    </Dialog>
  );
}

function SettingsDialog() {
  const tab = 'border border-b-0 border-[#dcdcdc] whitespace-nowrap';
  return (
    <Dialog title="設定" className="left-[172px] top-[150px] h-[567px] w-[532px]">
      <div className="flex flex-1 flex-col pb-[9px] pl-[7px] pr-[6px] pt-2 text-[12px]">
        <div className="flex items-end">
          <button type="button" className={`${tab} -mb-px h-6 w-[57px] bg-white pb-[2px] text-[11px]`}>キー設定</button>
          <button type="button" className={`${tab} h-[21px] w-[46px] border-l-0 text-[11px]`}>色設定</button>
          <button type="button" className={`${tab} h-[21px] w-[73px] border-l-0 text-[11px]`}>ローマ字設定</button>
        </div>
        <div className="mr-[3px] flex flex-1 flex-col border border-[#dcdcdc] bg-white pb-[5px] pl-3 pr-[10px] pt-4">
          <div className="flex flex-1 items-end border border-[#dcdcdc] pb-[9px] pl-2 text-[11px] leading-[18px]">
            説明 ： 「空白」と逆の幅のスペースを入力します。
          </div>
        </div>
        <div className="mt-[9px] flex justify-end gap-[9px]">
          <DialogButton>OK</DialogButton>
          <DialogButton>キャンセル</DialogButton>
          <DialogButton disabled>適用(<u>A</u>)</DialogButton>
          <DialogButton>ヘルプ</DialogButton>
        </div>
      </div>
    </Dialog>
  );
}

function StepBadge({ number, className }) {
  return (
    <span className={`absolute flex size-10 items-center justify-center rounded-full bg-white shadow-[1px_2px_5px_rgba(0,0,0,0.4)] ${className}`}>
      <span className="flex size-[35px] items-center justify-center rounded-full border border-[#f00] font-['Noto_Sans',sans-serif] text-[26px] font-bold leading-8 text-[#f00] [text-shadow:-3px_0_2px_#ccc,3px_0_2px_#ddd]">
        {number}
      </span>
    </span>
  );
}

function PreviewBox() {
  return (
    <div className="h-[103px] w-[218px] border border-b-white border-l-[#a0a0a0] border-r-white border-t-[#a0a0a0]">
      <div className="h-full border border-b-[#e3e3e3] border-l-[#696969] border-r-[#e3e3e3] border-t-[#696969] bg-white" />
    </div>
  );
}

function FunctionDialog() {
  return (
    <Dialog title="機能選択" active className="left-[193px] top-[229px] h-[409px] w-[490px]">
      <div className="flex flex-1 flex-col px-3 pt-[9px] text-[12px]">
        <div className="h-[150px] border border-[#828790] bg-white px-px pt-px">
          <div role="listbox" aria-label="機能" className="flex overflow-hidden">
            {FUNCTIONS.map((names, col) => (
              <ul key={col} className={`w-24 shrink-0 whitespace-nowrap pl-[2px] leading-4 ${col === 4 ? 'text-[11px]' : ''}`}>
                {names.map((name, row) => (
                  <li key={row} role="option" aria-selected={name === '-'} className="h-4">
                    {name === '-' ? <span className="-ml-[2px] block h-full w-2 bg-[#0078d7] text-center text-white">-</span> : name}
                  </li>
                ))}
              </ul>
            ))}
          </div>
          <div className="mt-[2px] flex h-[15px] items-center bg-[#f0f0f0]">
            <svg width="17" height="9" viewBox="0 0 17 9" fill="none" stroke="#505050" strokeWidth="2"><path d="M10 .8L6.200 4.500 10 8.200" /></svg>
            <div className="h-full flex-1">
              <div className="h-full w-[67%] bg-[#cdcdcd]" />
            </div>
            <svg width="17" height="9" viewBox="0 0 17 9" fill="none" stroke="#505050" strokeWidth="2"><path d="M7 .8l3.800 3.700L7 8.200" /></svg>
          </div>
        </div>
        <fieldset className="mt-[9px] border border-[#dcdcdc] pb-[5px] pl-[5px]">
          <legend className="ml-[2px] px-[2px] text-[11px] leading-4">プレビュー</legend>
          <div className="flex gap-[10px] pt-1">
            <PreviewBox />
            <PreviewBox />
          </div>
          <p className="mt-[9px] flex gap-4 text-[11px] leading-5">
            <span>説明:</span>
            <span>設定されていません</span>
          </p>
        </fieldset>
        <div className="mt-[14px] flex gap-7 pl-[129px]">
          <div className="relative">
            <DialogButton focused>OK</DialogButton>
            <span className="pointer-events-none absolute -bottom-[6px] -left-1 -right-[5px] -top-1 rounded-[6px] border-[7px] border-[#f00]" />
          </div>
          <DialogButton>キャンセル</DialogButton>
        </div>
      </div>
      <span className="pointer-events-none absolute left-[7px] top-[36px] h-[26px] w-[22px] rounded-[6px] border-[7px] border-[#f00]" />
      <StepBadge number={8} className="left-[39px] top-[20px]" />
      <StepBadge number={9} className="left-[164px] top-[314px]" />
    </Dialog>
  );
}

export default function App() {
  return (
    <div className="relative flex h-screen flex-col overflow-hidden bg-[#e6e6e6] font-['Open_Sans','Noto_Sans_CJK_JP',sans-serif]">
      <TitleBar />
      <TabBar />
      <Ribbon />
      <FormulaBar />
      <main className="flex min-h-0 flex-1">
        <Sheet />
        <div className="flex w-[21px] shrink-0 flex-col pl-[3px] pt-[2px]">
          <ScrollButton label="上へスクロール" path="M0 5h7L3.500 1z" />
          <div className="w-[15px] flex-1 bg-[#dadada]">
            <div className="h-[85%] border border-[#ababab] bg-white" />
          </div>
          <ScrollButton label="下へスクロール" path="M0 2h7L3.500 6z" />
        </div>
      </main>
      <SheetTabs />
      <StatusBar />
      <ImeDialog />
      <SettingsDialog />
      <FunctionDialog />
    </div>
  );
}
